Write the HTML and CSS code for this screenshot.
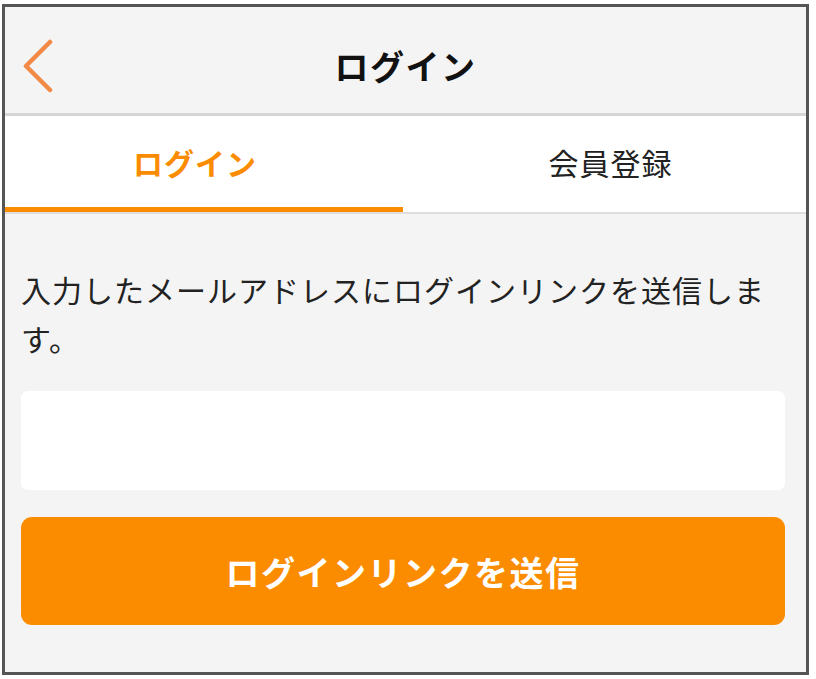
FILE: index.html
```html
<!DOCTYPE html>
<html lang="ja">
<head>
<meta charset="utf-8">
<title>ログイン</title>
<link rel="stylesheet" href="styles.css">
</head>
<body>
<div class="frame">
  <header class="header">
    <div class="header-left">
      <svg class="back" width="32" height="54" viewBox="0 0 32 54" aria-hidden="true">
        <path d="M28 3 L4 27 L28 51" fill="none" stroke="#f08a45" stroke-width="4.5" stroke-linecap="round" stroke-linejoin="round"/>
      </svg>
    </div>
    <h1 class="title">ログイン</h1>
    <div class="header-right"></div>
  </header>
  <nav class="tabs">
    <div class="tab tab-active">ログイン</div>
    <div class="tab tab-second">会員登録</div>
  </nav>
  <main class="content">
    <p class="desc">入力したメールアドレスにログインリンクを送信します。</p>
    <div class="input"></div>
    <button class="submit">ログインリンクを送信</button>
  </main>
</div>
</body>
</html>
```

FILE: styles.css
```css
* { box-sizing: border-box; }
html, body {
  margin: 0;
  padding: 0;
  background: #ffffff;
}
body {
  font-family: "Noto Sans CJK JP", "Noto Sans", sans-serif;
  color: #222222;
}
.frame {
  margin: 4px 0 0 2px;
  width: 807px;
  height: 671px;
  border: 3px solid #555555;
  background: #f4f4f4;
  display: flex;
  flex-direction: column;
}
.header {
  height: 109px;
  padding-top: 12px;
  display: grid;
  grid-template-columns: 1fr auto 1fr;
  align-items: center;
  background: #f4f4f4;
  border-bottom: 3px solid #d6d6d6;
}
.header-left {
  padding-left: 17px;
  display: flex;
  align-items: center;
}
.back { display: block; }
.title {
  margin: 0;
  font-size: 34px;
  font-weight: 700;
  letter-spacing: 1.5px;
  color: #111111;
  line-height: 1;
}
.tabs {
  display: flex;
  background: #ffffff;
  border-bottom: 2px solid #dedede;
}
.tab {
  height: 96px;
  display: flex;
  align-items: center;
  justify-content: center;
  font-size: 30px;
  letter-spacing: 1px;
  color: #222222;
  border-bottom: 5px solid transparent;
}
.tab-active {
  flex: 0 0 398px;
  padding-right: 18px;
  color: #fb8c00;
  font-weight: 700;
  border-bottom-color: #fb8c00;
}
.tab-second {
  flex: 1 1 auto;
  padding-left: 12px;
}
.content {
  padding: 51px 21px 0 16px;
  display: flex;
  flex-direction: column;
}
.desc {
  margin: 0;
  font-size: 30px;
  line-height: 49px;
  letter-spacing: 1px;
  color: #222222;
}
.input {
  margin-top: 28px;
  height: 99px;
  background: #ffffff;
  border-radius: 7px;
}
.submit {
  margin-top: 27px;
  height: 108px;
  border: none;
  border-radius: 11px;
  background: #fb8c00;
  color: #ffffff;
  font-family: "Noto Sans CJK JP", "Noto Sans", sans-serif;
  font-size: 34px;
  font-weight: 700;
  letter-spacing: 1.5px;
  padding: 0;
}
```
